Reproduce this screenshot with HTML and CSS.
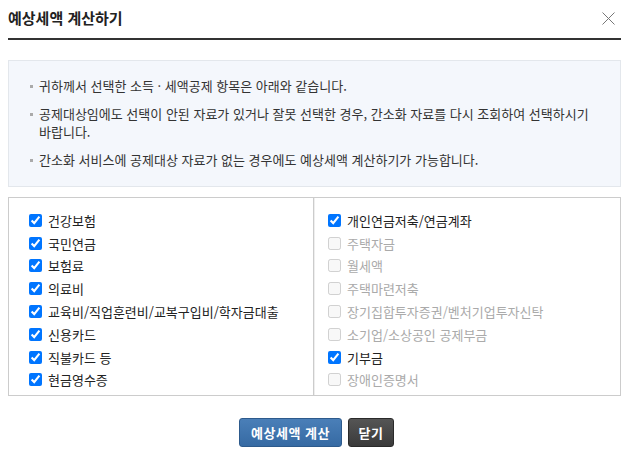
FILE: index.html
```html
<!DOCTYPE html>
<html lang="ko">
<head>
<meta charset="utf-8">
<title>예상세액 계산하기</title>
<link rel="stylesheet" href="styles.css">
</head>
<body>
<div class="dialog">
  <div class="header">
    <h1 class="title">예상세액 계산하기</h1>
    <button class="close" type="button" aria-label="닫기">
      <svg width="13" height="13" viewBox="0 0 13 13"><path d="M0.5 0.5 L12.5 12.5 M12.5 0.5 L0.5 12.5" stroke="#777" stroke-width="1" fill="none"/></svg>
    </button>
  </div>
  <div class="info">
    <p class="info-item">귀하께서 선택한 소득 · 세액공제 항목은 아래와 같습니다.</p>
    <p class="info-item">공제대상임에도 선택이 안된 자료가 있거나 잘못 선택한 경우, 간소화 자료를 다시 조회하여 선택하시기 바랍니다.</p>
    <p class="info-item">간소화 서비스에 공제대상 자료가 없는 경우에도 예상세액 계산하기가 가능합니다.</p>
  </div>
  <div class="panel">
    <ul class="col col-left">
      <li class="row"><input type="checkbox" checked><span>건강보험</span></li>
      <li class="row"><input type="checkbox" checked><span>국민연금</span></li>
      <li class="row"><input type="checkbox" checked><span>보험료</span></li>
      <li class="row"><input type="checkbox" checked><span>의료비</span></li>
      <li class="row"><input type="checkbox" checked><span>교육비/직업훈련비/교복구입비/학자금대출</span></li>
      <li class="row"><input type="checkbox" checked><span>신용카드</span></li>
      <li class="row"><input type="checkbox" checked><span>직불카드 등</span></li>
      <li class="row"><input type="checkbox" checked><span>현금영수증</span></li>
    </ul>
    <ul class="col col-right">
      <li class="row"><input type="checkbox" checked><span>개인연금저축/연금계좌</span></li>
      <li class="row off"><input type="checkbox" disabled><span>주택자금</span></li>
      <li class="row off"><input type="checkbox" disabled><span>월세액</span></li>
      <li class="row off"><input type="checkbox" disabled><span>주택마련저축</span></li>
      <li class="row off"><input type="checkbox" disabled><span>장기집합투자증권/벤처기업투자신탁</span></li>
      <li class="row off"><input type="checkbox" disabled><span>소기업/소상공인 공제부금</span></li>
      <li class="row"><input type="checkbox" checked><span>기부금</span></li>
      <li class="row off"><input type="checkbox" disabled><span>장애인증명서</span></li>
    </ul>
  </div>
  <div class="actions">
    <button class="btn btn-primary" type="button">예상세액 계산</button>
    <button class="btn btn-dark" type="button">닫기</button>
  </div>
</div>
</body>
</html>
```
FILE: styles.css
```css
html, body {
  margin: 0;
  padding: 0;
  background: #fff;
}
body {
  font-family: "Noto Sans CJK KR", "Noto Sans", sans-serif;
  color: #222;
}
.dialog {
  padding: 0 8px;
}
.header {
  height: 38px;
  display: flex;
  align-items: center;
  justify-content: space-between;
  border-bottom: 2px solid #333;
}
.title {
  margin: 0;
  font-size: 15px;
  font-weight: bold;
  color: #222;
  position: relative;
  top: -2px;
}
.close {
  border: 0;
  background: none;
  padding: 0;
  margin-right: 6px;
  width: 13px;
  height: 13px;
  display: flex;
  position: relative;
  top: -1px;
}
.info {
  margin-top: 20px;
  background: #f4f7fc;
  border: 1px solid #e3e7ec;
  padding: 16px 14px 17px 21px;
}
.info-item {
  margin: 0 0 10px 0;
  padding-left: 9px;
  position: relative;
  font-size: 13px;
  line-height: 18px;
  color: #333;
  word-break: keep-all;
}
.info-item:last-child {
  margin-bottom: 0;
}
.info-item::before {
  content: "";
  position: absolute;
  left: 0;
  top: 8px;
  width: 3px;
  height: 3px;
  background: #aaa;
}
.panel {
  margin-top: 10px;
  border: 1px solid #ccc;
  display: grid;
  grid-template-columns: 305px 1fr;
}
.col {
  list-style: none;
  margin: 0;
  padding: 11px 0 4px 16px;
}
.col-left {
  border-right: 1px solid #ccc;
}
.col-right {
  border-left: 1px solid #eee;
  padding-left: 9px;
}
.row {
  height: 22.8px;
  display: flex;
  align-items: center;
  font-size: 13px;
  color: #222;
}
.row input {
  margin: 0 6px 0 4px;
  width: 13px;
  height: 13px;
}
.row.off {
  color: #aaa;
}
.actions {
  margin-top: 22px;
  padding-left: 4px;
  display: flex;
  justify-content: center;
  gap: 6px;
}
.btn {
  height: 29px;
  border-radius: 3px;
  font-family: "Noto Sans CJK KR", sans-serif;
  font-size: 13px;
  font-weight: bold;
  letter-spacing: 0.5px;
  color: #fff;
  padding: 0;
  cursor: pointer;
}
.btn-primary {
  width: 103px;
  background: linear-gradient(#4a7fb8, #366aa3);
  border: 1px solid #2d5a8c;
}
.btn-dark {
  width: 46px;
  background: linear-gradient(#555, #3a3a3a);
  border: 1px solid #2a2a2a;
}
```
